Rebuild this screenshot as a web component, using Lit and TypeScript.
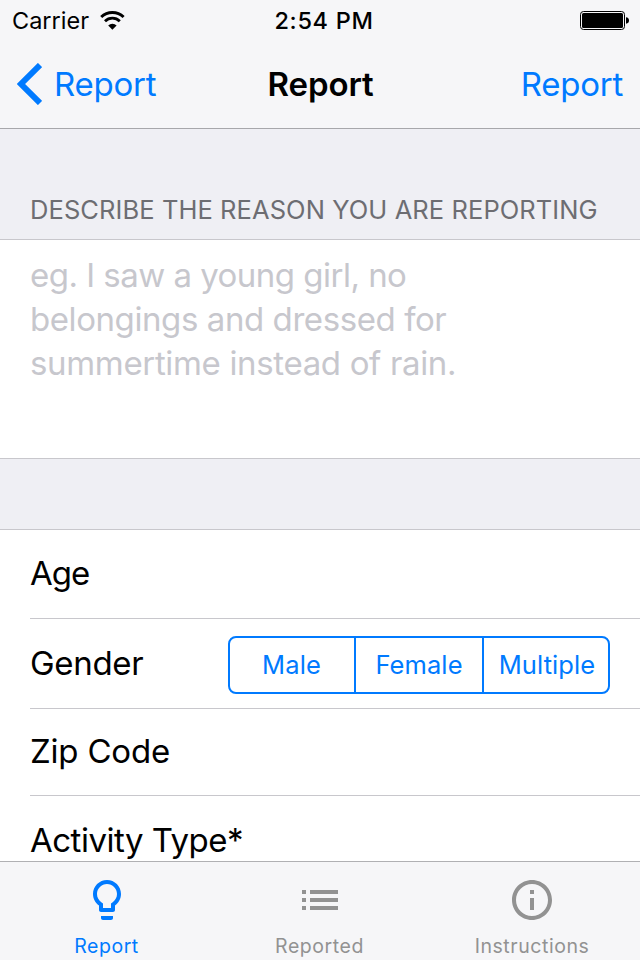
import { LitElement, html, css, svg } from "lit";
import { customElement, state } from "lit/decorators.js";
import { classMap } from "lit/directives/class-map.js";

const bulb = svg`<path d="M9 21c0 .55.45 1 1 1h4c.55 0 1-.45 1-1v-1H9v1zm3-19C8.14 2 5 5.14 5 9c0 2.38 1.19 4.47 3 5.74V17c0 .55.45 1 1 1h6c.55 0 1-.45 1-1v-2.26c1.81-1.27 3-3.36 3-5.74 0-3.86-3.14-7-7-7zm2.85 11.1l-.85.6V16h-4v-2.3l-.85-.6C7.8 12.16 7 10.63 7 9c0-2.76 2.24-5 5-5s5 2.24 5 5c0 1.63-.8 3.16-2.15 4.1z"/>`;
const list = svg`<path d="M3 13h2v-2H3v2zm0 4h2v-2H3v2zm0-8h2V7H3v2zm4 4h14v-2H7v2zm0 4h14v-2H7v2zM7 7v2h14V7H7z"/>`;
const info = svg`<path d="M11 17h2v-6h-2v6zm1-15C6.48 2 2 6.48 2 12s4.48 10 10 10 10-4.48 10-10S17.52 2 12 2zm0 18c-4.41 0-8-3.59-8-8s3.59-8 8-8 8 3.59 8 8-3.59 8-8 8zM11 9h2V7h-2v2z"/>`;

const tabs = [
  { name: "Report", icon: bulb },
  { name: "Reported", icon: list },
  { name: "Instructions", icon: info },
];

@customElement("app-root")
export class AppRoot extends LitElement {
  @state() private tab = 0;

  static styles = css`
    :host {
      display: flex;
      flex-direction: column;
      width: 640px;
      height: 960px;
      overflow: hidden;
      background: #efeff4;
      color: #000;
      font-family: "Inter", "Liberation Sans", sans-serif;
      white-space: nowrap;
    }
    svg { display: block; }
    .top {
      flex: none;
      height: 128px;
      background: #f6f6f8;
      border-bottom: 1px solid #a7a7ab;
    }
    .status, .nav {
      display: grid;
      grid-template-columns: 1fr auto 1fr;
      align-items: center;
    }
    .status {
      height: 41px;
      padding: 0 11px 0 12px;
      font-size: 23.5px;
      line-height: 41px;
    }
    .carrier { display: flex; align-items: center; gap: 11px; }
    .time { font-weight: 500; letter-spacing: 0.7px; margin-left: 7px; }
    .battery { justify-self: end; }
    .nav {
      height: 86px;
      padding: 0 17px;
      font-size: 33px;
      line-height: 86px;
      letter-spacing: -0.25px;
    }
    .back { display: flex; align-items: center; gap: 12px; color: #007aff; }
    .title { font-weight: 600; letter-spacing: -0.1px; margin-left: 1px; }
    .action { justify-self: end; color: #007aff; }
    .content { flex: 1; min-height: 0; overflow: hidden; }
    .heading {
      height: 59px;
      padding: 51px 30px 0;
      border-bottom: 1px solid #c8c7cc;
      color: #6d6d72;
      font-size: 25.5px;
      line-height: 60px;
      letter-spacing: 0.08px;
    }
    .reason {
      height: 205px;
      padding: 13px 30px 0;
      background: #fff;
      border-bottom: 1px solid #c8c7cc;
      color: #c7c7cd;
      font-size: 33px;
      line-height: 44px;
    }
    .l1 { letter-spacing: -0.52px; }
    .l2 { letter-spacing: -0.42px; }
    .l3 { letter-spacing: -0.34px; }
    .form {
      margin-top: 70px;
      border-top: 1px solid #c8c7cc;
      background: #fff;
      padding-left: 30px;
      font-size: 33px;
    }
    .row {
      display: flex;
      box-sizing: border-box;
      align-items: center;
      justify-content: space-between;
      height: 89px;
      padding: 0 30px 2px 0;
      border-bottom: 1px solid #c8c7cc;
    }
    .age { letter-spacing: -1px; }
    .row.gender { height: 90px; letter-spacing: -0.3px; }
    .row.zip { height: 87px; letter-spacing: -0.2px; }
    .row.activity { padding-bottom: 0; letter-spacing: -0.5px; }
    .segments {
      display: grid;
      grid-template-columns: 126px 128px 124px;
      box-sizing: border-box;
      width: 382px;
      height: 58px;
      margin-top: 4px;
      border: 2px solid #007aff;
      border-radius: 8px;
      color: #007aff;
      font-size: 25.5px;
      line-height: 54px;
      letter-spacing: 0.1px;
      text-align: center;
    }
    .segment { box-sizing: border-box; }
    .segment:first-child { padding-right: 1px; }
    .segment:last-child { padding-left: 2px; }
    .segment:not(:last-child) { border-right: 2px solid #007aff; }
    .tabs {
      flex: none;
      display: grid;
      grid-template-columns: 213px 213px 212px;
      height: 98px;
      background: #f6f6f8;
      border-top: 1px solid #b0b0b3;
    }
    .tab {
      display: flex;
      flex-direction: column;
      align-items: center;
      padding-top: 14px;
      color: #929292;
      font-size: 19.5px;
      line-height: 24px;
      letter-spacing: 0.55px;
    }
    .tab svg { fill: currentColor; margin-bottom: 10px; }
    .tab.on { color: #007aff; }
  `;

  render() {
    return html`
      <header class="top">
        <div class="status">
          <div class="carrier">
            <span>Carrier</span>
            <svg width="26" height="20" viewBox="0 0 26 20">
              <path d="M1.2 6a16.4 16.4 0 0 1 22.4 0" fill="none" stroke="#000" stroke-width="3" />
              <path d="M5 10.2a10.5 10.5 0 0 1 14.8 0" fill="none" stroke="#000" stroke-width="2.8" />
              <path d="M12.4 18.7l-4.2-4.2a6 6 0 0 1 8.4 0z" />
            </svg>
          </div>
          <div class="time">2:54 PM</div>
          <svg class="battery" width="49" height="20" viewBox="0 0 49 20">
            <rect x="0.5" y="0.5" width="44" height="18" rx="3" fill="none" stroke="#000" />
            <rect x="2" y="2" width="41" height="15" rx="1.5" />
            <path d="M46 6.3c2 .3 3 1.4 3 3.2s-1 2.900-3 3.200z" />
          </svg>
        </div>
        <nav class="nav">
          <div class="back">
            <svg width="25" height="42" viewBox="0 0 25 42">
              <path d="M23 2L4 21l19 19" fill="none" stroke="#007aff" stroke-width="5.900" />
            </svg>
            <span>Report</span>
          </div>
          <div class="title">Report</div>
          <div class="action">Report</div>
        </nav>
      </header>
      <main class="content">
        <div class="heading">DESCRIBE THE REASON YOU ARE REPORTING</div>
        <div class="reason">
          <div class="l1">eg. I saw a young girl, no</div>
          <div class="l2">belongings and dressed for</div>
          <div class="l3">summertime instead of rain.</div>
        </div>
        <div class="form">
          <div class="row age">Age</div>
          <div class="row gender">
            <span>Gender</span>
            <div class="segments">
              ${["Male", "Female", "Multiple"].map((s) => html`<div class="segment">${s}</div>`)}
            </div>
          </div>
          <div class="row zip">Zip Code</div>
          <div class="row activity">Activity Type*</div>
        </div>
      </main>
      <footer class="tabs">
        ${tabs.map(
          (t, i) => html`
            <div class=${classMap({ tab: true, on: i === this.tab })} @click=${() => (this.tab = i)}>
              <svg width="48" height="48" viewBox="0 0 24 24">${t.icon}</svg>
              <span>${t.name}</span>
            </div>
          `
        )}
      </footer>
    `;
  }
}
